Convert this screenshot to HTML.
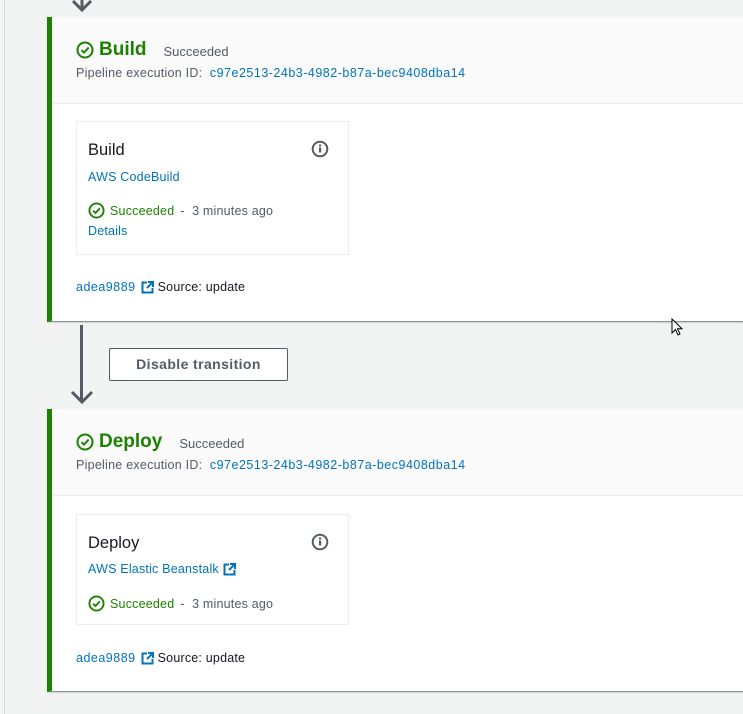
<!DOCTYPE html>
<html><head><meta charset="utf-8"><style>
*{margin:0;padding:0;box-sizing:border-box}
body{width:743px;height:714px;background:#f2f3f3;font-family:"Liberation Sans",sans-serif;position:relative;overflow:hidden;color:#16191f}
.abs{position:absolute}
.vline{left:4px;top:0;width:1px;height:714px;background:#d5dbdb}
.panel{left:47px;width:700px;background:#fff;border-left:5px solid #1d8102;border-bottom:1px solid #879596;box-shadow:0 1px 1px rgba(0,0,0,.15)}
.head{position:absolute;left:0;top:0;right:0;height:87px;background:#fafafa;border-bottom:1px solid #eaeded}
.title{position:absolute;left:24px;top:22px;font-size:19px;font-weight:bold;color:#1d8102;display:flex;align-items:center}
.title svg{margin-right:5px}
.st{font-size:13px;font-weight:normal;color:#545b64;margin-left:17px;margin-top:3px}
.pid{position:absolute;left:24px;top:49px;font-size:12.5px;color:#545b64;letter-spacing:.25px}
.pid a{letter-spacing:.5px}
.pid a,.link{color:#0073bb;text-decoration:none}
.card{position:absolute;left:24px;width:273px;border:1px solid #eaeded;background:#fff}
.ct{position:absolute;left:11px;top:19px;font-size:16.5px;color:#16191f}
.info{position:absolute;right:19px;top:18px}
.prov{position:absolute;left:11px;font-size:12.5px;color:#0073bb;letter-spacing:.2px}
.ok{position:absolute;left:11px;font-size:12.5px;display:flex;align-items:center;color:#545b64;letter-spacing:.2px}
.ok .g{color:#1d8102;margin:0 6px 0 5px}
.foot{position:absolute;left:24px;font-size:12.5px;color:#16191f;display:flex;align-items:center;letter-spacing:.2px}
.foot .link{margin-right:5px;letter-spacing:.5px}
.foot svg{margin-right:4px}
.arrow{position:absolute;left:80px;width:3px;background:#545b64}
.btn{left:109px;top:348px;width:179px;height:33px;border:1px solid #545b64;border-radius:2px;background:#fff;font-size:14px;font-weight:bold;color:#545b64;text-align:center;line-height:31px;letter-spacing:.4px}
</style></head><body>
<div class="abs vline"></div>
<svg class="abs" style="left:70px;top:0" width="24" height="12"><path d="M12 0V10M3 1L12 10L21 1" stroke="#545b64" stroke-width="3" fill="none"/></svg>

<div class="abs panel" style="top:17px;height:305px">
 <div class="head">
  <div class="title"><svg width="18" height="18" viewBox="0 0 18 18"><circle cx="9" cy="9" r="7.5" fill="none" stroke="#1d8102" stroke-width="2"/><path d="M5.5 9.2L8 11.6L12.6 6.6" fill="none" stroke="#1d8102" stroke-width="2"/></svg>Build<span class="st">Succeeded</span></div>
  <div class="pid">Pipeline execution ID:&nbsp; <a>c97e2513-24b3-4982-b87a-bec9408dba14</a></div>
 </div>
 <div class="card" style="top:104px;height:134px">
  <div class="ct">Build</div>
  <svg class="info" width="18" height="18" viewBox="0 0 18 18"><circle cx="9" cy="9" r="7.3" fill="none" stroke="#545b64" stroke-width="2"/><rect x="8" y="7.5" width="2.2" height="5" fill="#545b64"/><rect x="8" y="4.5" width="2.2" height="2" fill="#545b64"/></svg>
  <div class="prov" style="top:48px">AWS CodeBuild</div>
  <div class="ok" style="top:80px"><svg width="17" height="17" viewBox="0 0 18 18"><circle cx="9" cy="9" r="7.5" fill="none" stroke="#1d8102" stroke-width="2"/><path d="M5.5 9.2L8 11.6L12.6 6.6" fill="none" stroke="#1d8102" stroke-width="2"/></svg><span class="g">Succeeded</span>- &nbsp;3 minutes ago</div>
  <div class="prov" style="top:102px">Details</div>
 </div>
 <div class="foot" style="top:263px"><span class="link">adea9889</span><svg width="13" height="13" viewBox="0 0 13 13"><path d="M6 1.5H1.5V11.5H11.5V7" fill="none" stroke="#0073bb" stroke-width="2"/><path d="M7 1H12V6M12 1L6 7" fill="none" stroke="#0073bb" stroke-width="2"/></svg>Source: update</div>
</div>

<div class="arrow" style="top:325px;height:75px"></div>
<svg class="abs" style="left:70px;top:388px" width="24" height="18"><path d="M2 4L12 14L22 4" stroke="#545b64" stroke-width="3" fill="none"/></svg>
<div class="abs btn">Disable transition</div>

<div class="abs panel" style="top:409px;height:283px">
 <div class="head">
  <div class="title"><svg width="18" height="18" viewBox="0 0 18 18"><circle cx="9" cy="9" r="7.5" fill="none" stroke="#1d8102" stroke-width="2"/><path d="M5.5 9.2L8 11.6L12.6 6.6" fill="none" stroke="#1d8102" stroke-width="2"/></svg>Deploy<span class="st">Succeeded</span></div>
  <div class="pid">Pipeline execution ID:&nbsp; <a>c97e2513-24b3-4982-b87a-bec9408dba14</a></div>
 </div>
 <div class="card" style="top:105px;height:111px">
  <div class="ct">Deploy</div>
  <svg class="info" width="18" height="18" viewBox="0 0 18 18"><circle cx="9" cy="9" r="7.3" fill="none" stroke="#545b64" stroke-width="2"/><rect x="8" y="7.5" width="2.2" height="5" fill="#545b64"/><rect x="8" y="4.5" width="2.2" height="2" fill="#545b64"/></svg>
  <div class="prov" style="top:47px;display:flex;align-items:center">AWS Elastic Beanstalk&nbsp;<svg width="13" height="13" viewBox="0 0 13 13"><path d="M6 1.5H1.5V11.5H11.5V7" fill="none" stroke="#0073bb" stroke-width="2"/><path d="M7 1H12V6M12 1L6 7" fill="none" stroke="#0073bb" stroke-width="2"/></svg></div>
  <div class="ok" style="top:80px"><svg width="17" height="17" viewBox="0 0 18 18"><circle cx="9" cy="9" r="7.5" fill="none" stroke="#1d8102" stroke-width="2"/><path d="M5.5 9.2L8 11.6L12.6 6.6" fill="none" stroke="#1d8102" stroke-width="2"/></svg><span class="g">Succeeded</span>- &nbsp;3 minutes ago</div>
 </div>
 <div class="foot" style="top:242px"><span class="link">adea9889</span><svg width="13" height="13" viewBox="0 0 13 13"><path d="M6 1.5H1.5V11.5H11.5V7" fill="none" stroke="#0073bb" stroke-width="2"/><path d="M7 1H12V6M12 1L6 7" fill="none" stroke="#0073bb" stroke-width="2"/></svg>Source: update</div>
</div>

<svg class="abs" style="left:671px;top:318px" width="14" height="20" viewBox="0 0 14 20"><path d="M1 1V15L4.5 11.5L7 17L9 16L6.5 10.8H11Z" fill="#fff" stroke="#000" stroke-width="1"/></svg>
</body></html>
